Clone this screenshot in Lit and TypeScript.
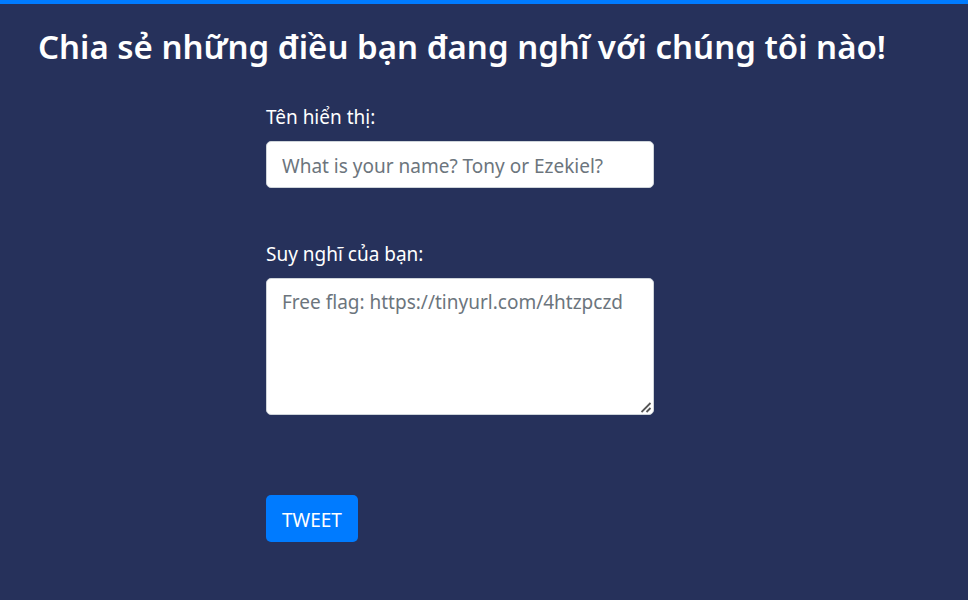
import { LitElement, html, css } from "lit";
import { customElement } from "lit/decorators.js";

@customElement("app-root")
export class AppRoot extends LitElement {
  static styles = css`
    :host {
      display: block;
      min-height: 100vh;
      box-sizing: border-box;
      border-top: 4px solid #007bff;
      background: #26315b;
      color: #fff;
      font-family: "Noto Sans", "Open Sans", sans-serif;
      font-size: 19px;
      line-height: 29px;
    }
    * {
      box-sizing: border-box;
    }
    h1 {
      margin: 0;
      padding: 21px 38px 0;
      font-size: 33px;
      font-weight: 600;
      line-height: 44px;
    }
    form {
      margin: 34px 314px 0 266px;
      display: flex;
      flex-direction: column;
      align-items: flex-start;
    }
    label {
      margin-bottom: 9px;
    }
    .control {
      display: block;
      width: 100%;
      margin: 0;
      padding: 9px 15px 7px;
      border: 1px solid #ced4da;
      border-radius: 5px;
      background: #fff;
      color: #495057;
      font: inherit;
    }
    .control::placeholder {
      color: #6c757d;
      opacity: 1;
    }
    .name {
      height: 47px;
      margin-bottom: 52px;
    }
    .area {
      position: relative;
      width: 100%;
      margin-bottom: 80px;
    }
    .thought {
      height: 137px;
      resize: vertical;
    }
    .thought::-webkit-resizer {
      background: transparent;
    }
    .grip {
      position: absolute;
      right: 2px;
      bottom: 2px;
      pointer-events: none;
    }
    button {
      height: 47px;
      padding: 3px 16px 0;
      border: 0;
      border-radius: 5px;
      background: #007bff;
      color: #fff;
      font: inherit;
      cursor: pointer;
    }
  `;

  render() {
    return html`
      <h1>Chia sẻ những điều bạn đang nghĩ với chúng tôi nào!</h1>
      <form @submit=${(e: Event) => e.preventDefault()}>
        <label for="name">Tên hiển thị:</label>
        <input id="name" class="control name" type="text" placeholder="What is your name? Tony or Ezekiel?" />
        <label for="thought">Suy nghĩ của bạn:</label>
        <div class="area">
          <textarea id="thought" class="control thought" placeholder="Free flag: https://tinyurl.com/4htzpczd"></textarea>
          <svg class="grip" width="11" height="11" viewBox="0 0 11 11" aria-hidden="true">
            <path d="M0.5 10 9.5 1M5.5 10 9.5 6" fill="none" stroke="#555" stroke-width="1.8" />
          </svg>
        </div>
        <button type="submit">TWEET</button>
      </form>
    `;
  }
}
